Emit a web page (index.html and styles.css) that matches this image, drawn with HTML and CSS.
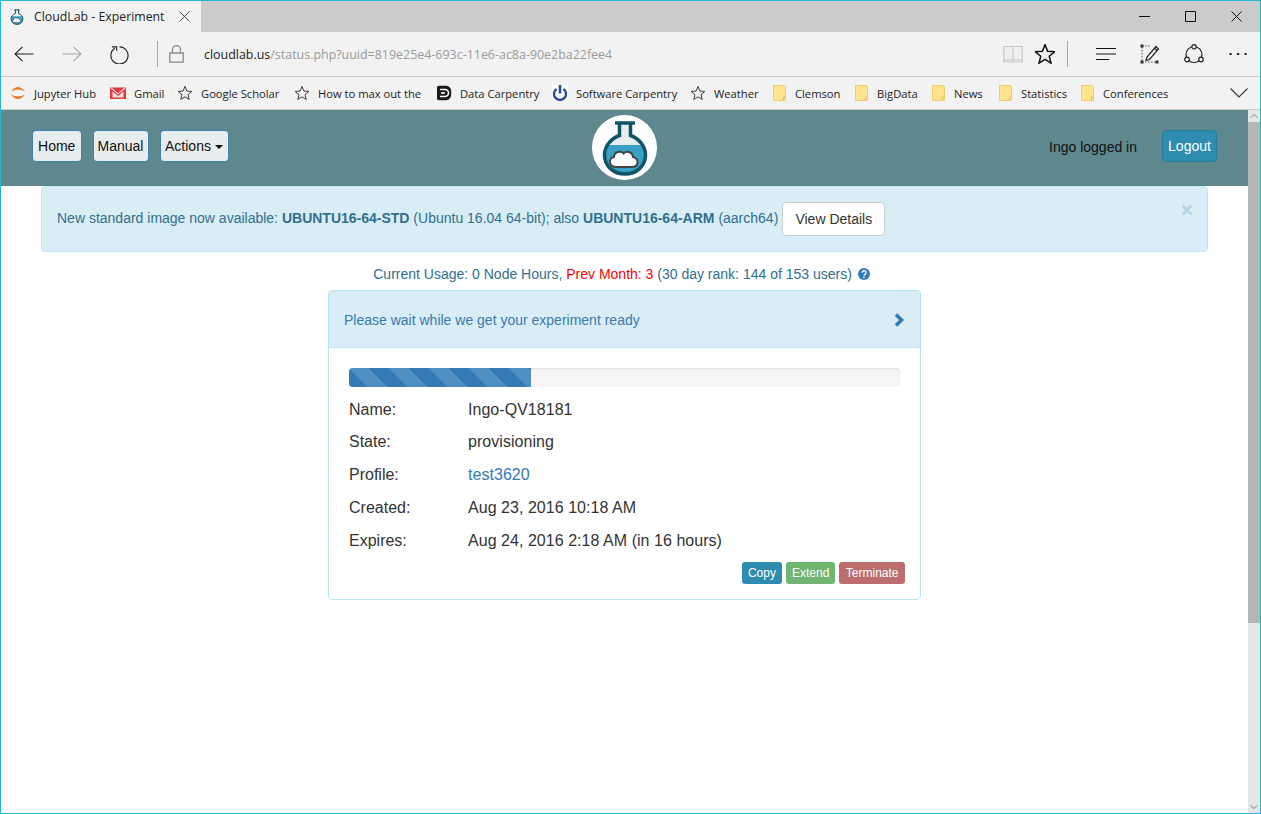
FILE: index.html
```html
<!DOCTYPE html>
<html lang="en">
<head>
<meta charset="utf-8">
<title>CloudLab - Experiment</title>
<link rel="stylesheet" href="styles.css">
</head>
<body>
<svg class="defs" width="0" height="0" aria-hidden="true">
  <symbol id="star" viewBox="0 0 18 18"><path d="M9 1.500l2.100 5.300 5.600.4-4.300 3.600 1.400 5.500L9 13.300l-4.800 3 1.400-5.500L1.300 7.200l5.600-.4z" fill="none" stroke="#3c3c3c" stroke-width="1.100"/></symbol>
  <symbol id="folder" viewBox="0 0 13 16"><path d="M.5.500h10.500l1.500 1v14H.5z" fill="#ffe38e" stroke="#f0cf6c"/><path d="M10.500 15v-3h2" fill="none" stroke="#e3bd54"/></symbol>
  <symbol id="flask" viewBox="0 0 48 56"><path d="M15 2h18M18 3v12.500C8 19 3 27 3 35c0 11 9 19 21 19s21-8 21-19c0-8-5-16-15-19.500V3z" fill="#e8eef0"/><path d="M4.500 25h39c3 11-1 28-19.500 28C7 53 1.500 37 4.500 25z" fill="#3ba0c6"/><path d="M14 3h20M18.500 3v12.500C9 19 3.500 27 3.500 35c0 11 9 19 20.500 19s20.500-8 20.500-19c0-8-5.500-16-15-19.500V3" fill="none" stroke="#0f5566" stroke-width="3.500"/><path d="M15.500 47c-8 0-8.500-9-2.500-10 0-5 7-7 9.500-3.500 3.500-3.500 9.500-1 9.500 3.500 6 1 6.500 10-1 10z" fill="#fff" stroke="#444" stroke-width="2"/></symbol>
</svg>
<div class="window">
  <header class="titlebar">
    <div class="tab">
      <svg class="tab-icon"><use href="#flask"/></svg>
      <span class="tab-title">CloudLab - Experiment</span>
      <svg class="tab-close" viewBox="0 0 11 11"><path d="M.5.500l10 10M10.500.5l-10 10" stroke="#444" fill="none"/></svg>
    </div>
    <div class="win-controls">
      <svg class="win-btn" viewBox="0 0 11 11"><path d="M0 5.500h11" stroke="#111" fill="none"/></svg>
      <svg class="win-btn" viewBox="0 0 11 11"><path d="M.5.500h10v10H.5z" stroke="#111" fill="none"/></svg>
      <svg class="win-btn" viewBox="0 0 11 11"><path d="M.5.500l10 10M10.500.5l-10 10" stroke="#111" fill="none"/></svg>
    </div>
  </header>

  <nav class="toolbar">
    <svg class="tool tool-back" viewBox="0 0 20 16"><path d="M19.500 8H1M8.500.8L1 8l7.500 7.200" fill="none" stroke="#222" stroke-width="1.100"/></svg>
    <svg class="tool tool-forward" viewBox="0 0 20 16"><path d="M.5 8H19M11.500.8L19 8l-7.500 7.200" fill="none" stroke="#a6a6a6" stroke-width="1.100"/></svg>
    <svg class="tool tool-refresh" viewBox="0 0 20 20"><path d="M5 3.500a9 9 0 1 0 5-1.500" fill="none" stroke="#222" stroke-width="1.200"/><path d="M2 2h5v4" fill="none" stroke="#222" stroke-width="1.200"/></svg>
    <span class="tool-sep"></span>
    <svg class="tool tool-lock" viewBox="0 0 15 18"><path d="M.8 8h13.400v9.200H.8zM3.500 8V4.500a4 4 0 0 1 8 0V8" fill="none" stroke="#8a8a8a" stroke-width="1.300"/></svg>
    <div class="url"><span class="url-host">cloudlab.us</span>/status.php?uuid=819e25e4-693c-11e6-ac8a-90e2ba22fee4</div>
    <svg class="tool tool-book" viewBox="0 0 20 18"><path d="M.8 1.500h8.200q.8 0 1 1v13.500q-.2-1-1-1H.8zM19.200 1.500H11q-.8 0-1 1v13.500q.2-1 1-1h8.200zM.8 15v2h18.400v-2" fill="#efefef" stroke="#c8c8c8" stroke-width="1.200"/></svg>
    <svg class="tool tool-fav" viewBox="1 1 16 16"><path d="M9 1.500l2.100 5.300 5.600.4-4.300 3.600 1.400 5.500L9 13.300l-4.800 3 1.400-5.500L1.300 7.200l5.600-.4z" fill="none" stroke="#111" stroke-width="1.200"/></svg>
    <span class="tool-sep tool-sep-right"></span>
    <svg class="tool tool-hub" viewBox="0 0 20 14"><path d="M0 1.500h20M0 7h20M0 12.500h13" stroke="#111" stroke-width="1.100" fill="none"/></svg>
    <svg class="tool tool-note" viewBox="0 0 20 20"><path d="M2 3v15h15" fill="none" stroke="#555" stroke-dasharray="1.500 1.500"/><path d="M2 2h9" fill="none" stroke="#555" stroke-dasharray="1.500 1.500"/><path d="M.5.500h3v3h-3zM.5 16.500h3v3h-3zM15.500 16.500h3v3h-3z" fill="#333"/><path d="M7 13l-1 3.500 3.500-1L18.500 5l-2.500-2.500zM14.500 4l2.500 2.500" fill="none" stroke="#222" stroke-width="1.200"/></svg>
    <svg class="tool tool-share" viewBox="0 0 20 20"><circle cx="10" cy="10.500" r="8" fill="none" stroke="#222" stroke-width="1.200"/><circle cx="10" cy="2.800" r="2.200" fill="#f2f2f2" stroke="#222" stroke-width="1.200"/><circle cx="3" cy="15.500" r="2.300" fill="#f2f2f2" stroke="#222" stroke-width="1.200"/><circle cx="17" cy="15.500" r="2.300" fill="#f2f2f2" stroke="#222" stroke-width="1.200"/></svg>
    <svg class="tool tool-more" viewBox="0 0 18 4"><path d="M.5 1h2.200v2H.5zM8 1h2.200v2H8zM15.500 1h2.200v2h-2.200z" fill="#222"/></svg>
  </nav>

  <div class="favbar">
    <a class="fav"><svg class="fav-icon" viewBox="0 0 16 16"><path d="M1 6.500Q8-2.500 15 6.500Q8 2.500 1 6.500zM1 9.500Q8 18.500 15 9.500Q8 13.500 1 9.500z" fill="#f37726"/></svg>Jupyter Hub</a>
    <a class="fav"><svg class="fav-icon" viewBox="0 0 16 16"><path d="M0 2.500h16v11.500H0z" fill="#e0393e"/><path d="M2.500 6.500L8 11l5.500-4.500v6h-11z" fill="#f6dfdf"/><path d="M1 3l7 5.800L15 3" fill="none" stroke="#f6dfdf" stroke-width="1.100"/></svg>Gmail</a>
    <a class="fav"><svg class="fav-icon"><use href="#star"/></svg>Google Scholar</a>
    <a class="fav"><svg class="fav-icon"><use href="#star"/></svg>How to max out the</a>
    <a class="fav"><svg class="fav-icon" viewBox="0 0 16 16"><path d="M3 .8h7.500a6 6 0 0 1 4.700 6.200v2a6 6 0 0 1-4.700 6.200H3A2 2 0 0 1 1 13V3a2 2 0 0 1 2-2.200z" fill="#1a1a1a"/><path d="M4 4.500h5a3 3 0 0 1 0 7H4" fill="none" stroke="#fff" stroke-width="1.600"/><path d="M5 8h4" stroke="#fff" stroke-width="1.600"/></svg>Data Carpentry</a>
    <a class="fav"><svg class="fav-icon" viewBox="0 0 16 16"><path d="M0 0h16v16H0z" fill="#fff"/><path d="M4.500 4a6 6 0 1 0 7 0" fill="none" stroke="#2a4a9e" stroke-width="2.400"/><path d="M8 0v8.500" stroke="#2a4a9e" stroke-width="2.600"/></svg>Software Carpentry</a>
    <a class="fav"><svg class="fav-icon"><use href="#star"/></svg>Weather</a>
    <a class="fav"><svg class="fav-icon fav-folder"><use href="#folder"/></svg>Clemson</a>
    <a class="fav"><svg class="fav-icon fav-folder"><use href="#folder"/></svg>BigData</a>
    <a class="fav"><svg class="fav-icon fav-folder"><use href="#folder"/></svg>News</a>
    <a class="fav"><svg class="fav-icon fav-folder"><use href="#folder"/></svg>Statistics</a>
    <a class="fav"><svg class="fav-icon fav-folder"><use href="#folder"/></svg>Conferences</a>
    <svg class="fav-more" viewBox="0 0 18 10"><path d="M.5.500L9 9l8.500-8.500" fill="none" stroke="#333" stroke-width="1.100"/></svg>
  </div>

  <div class="viewport">
    <main class="page">
      <div class="site-nav">
        <div class="site-nav-left">
          <a class="nav-btn">Home</a>
          <a class="nav-btn">Manual</a>
          <a class="nav-btn">Actions <span class="caret"></span></a>
        </div>
        <div class="logo"><svg class="logo-flask"><use href="#flask"/></svg></div>
        <div class="site-nav-right">
          <span class="logged">Ingo logged in</span>
          <a class="logout">Logout</a>
        </div>
      </div>

      <div class="alert">
        <span class="alert-text">New standard image now available: <b>UBUNTU16-64-STD</b> (Ubuntu 16.04 64-bit); also <b>UBUNTU16-64-ARM</b> (aarch64)</span>
        <a class="details-btn">View Details</a>
        <svg class="alert-close" viewBox="0 0 12 12"><path d="M1.500 1.500l9 9M10.500 1.500l-9 9" stroke="#b9d4e3" stroke-width="2.800" fill="none"/></svg>
      </div>

      <p class="usage">Current Usage: 0 Node Hours, <span class="red">Prev Month: 3</span> (30 day rank: 144 of 153 users) <svg class="help" viewBox="0 0 12 12"><circle cx="6" cy="6" r="6" fill="#337ab7"/><path d="M4 4.700a2 2 0 1 1 3 1.700c-.7.400-1 .7-1 1.400" fill="none" stroke="#fff" stroke-width="1.400"/><path d="M5.200 8.700h1.500v1.500H5.200z" fill="#fff"/></svg></p>

      <section class="panel">
        <div class="panel-head">
          <span class="panel-title">Please wait while we get your experiment ready</span>
          <svg class="chevron" viewBox="0 0 12 14"><path d="M3 1.500L8.500 7 3 12.500" fill="none" stroke="#337ab7" stroke-width="3.600"/></svg>
        </div>
        <div class="panel-body">
          <div class="progress"><div class="progress-bar" style="width: 33%"></div></div>
          <dl class="facts">
            <dt>Name:</dt><dd>Ingo-QV18181</dd>
            <dt>State:</dt><dd>provisioning</dd>
            <dt>Profile:</dt><dd><a class="link">test3620</a></dd>
            <dt>Created:</dt><dd>Aug 23, 2016 10:18 AM</dd>
            <dt>Expires:</dt><dd>Aug 24, 2016 2:18 AM (in 16 hours)</dd>
          </dl>
          <div class="actions">
            <a class="mini mini-copy">Copy</a>
            <a class="mini mini-extend">Extend</a>
            <a class="mini mini-term">Terminate</a>
          </div>
        </div>
      </section>
    </main>
    <aside class="scrollbar">
      <svg class="sb-arrow" viewBox="0 0 11 12"><path d="M2 7.500l3.500-3 3.500 3" fill="none" stroke="#a8a8a8" stroke-width="1.300"/></svg>
      <div class="sb-thumb"></div>
      <svg class="sb-arrow sb-arrow-end" viewBox="0 0 11 12"><path d="M2 4.500l3.500 3 3.500-3" fill="none" stroke="#a8a8a8" stroke-width="1.300"/></svg>
    </aside>
  </div>
</div>
</body>
</html>
```

FILE: styles.css
```css
* { box-sizing: border-box; }
html, body { margin: 0; padding: 0; height: 100%; overflow: hidden; background: #fff; }
.defs { position: absolute; }
.window {
  width: 1261px; height: 814px;
  border: 1px solid #24b7cc;
  display: flex; flex-direction: column;
  font-family: "Liberation Sans", Arial, sans-serif;
}

/* title bar */
.titlebar { height: 31px; background: #cbcbcb; display: flex; justify-content: space-between; flex: none; }
.tab { width: 200px; background: #f2f2f2; display: flex; align-items: center; font: 13px "Open Sans", sans-serif; color: #222; }
.tab-icon { width: 14px; height: 16px; margin-left: 9px; }
.tab-title { margin-left: 10px; width: 145px; white-space: nowrap; font-size: 12.300px; }
.tab-close { width: 11px; height: 11px; }
.win-controls { display: flex; gap: 35px; padding: 10px 18px 0 0; }
.win-btn { width: 11px; height: 11px; }

/* toolbar */
.toolbar { height: 45px; background: #f2f2f2; border-bottom: 1px solid #c9c9c9; display: flex; align-items: center; flex: none; padding-left: 13px; }
.tool { flex: none; }
.tool-back, .tool-forward { width: 20px; height: 16px; }
.tool-forward { margin-left: 28px; }
.tool-refresh { width: 19px; height: 19px; margin-left: 28px; }
.tool-sep { width: 1px; height: 26px; background: #a8a8a8; margin-left: 28px; flex: none; }
.tool-lock { width: 15px; height: 18px; margin-left: 11px; }
.url { margin-left: 20px; width: 799px; font: 12.440px "Open Sans", sans-serif; color: #9a9a9a; white-space: nowrap; }
.url-host { color: #222; }
.tool-book { width: 20px; height: 18px; }
.tool-fav { width: 20px; height: 20px; margin-left: 12px; }
.tool-sep-right { margin-left: 12px; }
.tool-hub { width: 20px; height: 14px; margin-left: 28px; }
.tool-note { width: 20px; height: 20px; margin-left: 24px; }
.tool-share { width: 20px; height: 20px; margin-left: 24px; }
.tool-more { width: 18px; height: 4px; margin-left: 25px; }

/* favourites */
.favbar {
  height: 33px; background: #f2f2f2; border-bottom: 1px solid #c9c9c9; flex: none;
  display: grid; align-items: center; padding-left: 9px;
  grid-template-columns: 100px 67px 117px 142px 116px 138px 83px 82px 77px 67px 82px 149px 18px;
  font: 11.200px "Open Sans", sans-serif; color: #222;
}
.fav { display: flex; align-items: center; white-space: nowrap; }
.fav-icon { width: 16px; height: 16px; margin-right: 8px; flex: none; }
.fav-icon.fav-folder { width: 13px; margin-right: 9px; }
.fav-more { width: 18px; height: 10px; }

/* page */
.viewport { flex: 1; display: flex; min-height: 0; }
.page { flex: 1; min-width: 0; font-size: 14px; color: #333; }
.site-nav { height: 76px; background: #5e888e; display: grid; grid-template-columns: 1fr auto 1fr; align-items: start; padding: 0 31px; }
.site-nav-left { display: grid; grid-template-columns: 49.500px 56px 69px; gap: 11px; margin-top: 20px; }
.nav-btn {
  height: 32px; display: flex; align-items: center; justify-content: center; gap: 4px; white-space: nowrap;
  background: #e8eef0; border: 1px solid #3f7fb8; border-radius: 4px; color: #111;
}
.caret { width: 0; height: 0; border-left: 4px solid transparent; border-right: 4px solid transparent; border-top: 4px solid #111; margin-top: 2px; }
.logo { width: 65px; height: 65px; margin-top: 5px; border-radius: 50%; background: #fff; display: flex; align-items: center; justify-content: center; }
.logo-flask { width: 48px; height: 56px; }
.site-nav-right { display: flex; justify-content: flex-end; align-items: center; gap: 25px; margin-top: 20px; }
.logged { color: #111; margin-top: 2px; }
.logout { height: 32px; width: 55px; display: flex; align-items: center; justify-content: center; background: #2d8cb0; border: 1px solid #2a7c9c; border-radius: 4px; color: #fff; }

.alert {
  position: relative; margin: 0 40px; height: 66px; padding: 0 15px 2px; display: flex; align-items: center; gap: 4px;
  background: #d9edf7; border: 1px solid #bce8f1; border-radius: 4px; color: #31708f;
}
.details-btn { height: 34px; width: 103px; display: flex; align-items: center; justify-content: center; background: #fff; border: 1px solid #ccc; border-radius: 4px; color: #333; margin-top: 2px; }
.alert-close { position: absolute; top: 17px; right: 14px; width: 12px; height: 12px; }

.usage { margin: 13px 0 7px; padding-right: 6px; height: 18px; line-height: 18px; text-align: center; color: #31708f; }
.red { color: #f00; }
.help { width: 12px; height: 12px; margin-left: 2px; vertical-align: -1px; }

.panel { width: 593px; height: 310px; margin: 0 auto; border: 1px solid #b5e5f0; border-radius: 4px; overflow: hidden; }
.panel-head { height: 57px; background: #d9edf7; border-bottom: 1px solid #bce8f1; display: flex; align-items: center; justify-content: space-between; padding: 2px 15px 0; color: #3a7ab0; }
.chevron { width: 12px; height: 14px; }
.panel-body { padding: 20px 15px 0 20px; }
.progress { height: 19px; width: 551px; background: #f5f5f5; border-radius: 4px; box-shadow: inset 0 1px 2px rgba(0,0,0,.1); overflow: hidden; }
.progress-bar {
  height: 100%; background-color: #337ab7;
  background-image: linear-gradient(45deg, rgba(255,255,255,.15) 25%, transparent 25%, transparent 50%, rgba(255,255,255,.15) 50%, rgba(255,255,255,.15) 75%, transparent 75%, transparent);
  background-size: 40px 40px;
}
.facts { margin: 6px 0 0; display: grid; grid-template-columns: 119px 1fr; grid-template-rows: 32px repeat(4, 33px); align-items: center; font-size: 16px; color: #333; }
.facts dt { font-weight: normal; }
.facts dd { margin: 0; letter-spacing: .04px; }
.facts dt:first-of-type, .facts dd:first-of-type { margin-top: 2px; }
.link { color: #337ab7; }
.actions { display: flex; justify-content: flex-end; gap: 4px; margin-top: 5px; }
.mini { height: 22px; padding: 0 6px; display: flex; align-items: center; border-radius: 3px; font-size: 12px; color: #fff; }
.mini-copy { background: #2d8cb0; }
.mini-extend { background: #6fb673; }
.mini-term { background: #bc6e6e; padding: 0 6.500px; }

/* scrollbar */
.scrollbar { width: 12px; flex: none; background: #e6e6e6; display: flex; flex-direction: column; }
.sb-arrow { width: 12px; height: 12px; flex: none; }
.sb-thumb { height: 501px; background: #b5b5b5; flex: none; }
.sb-arrow-end { margin-top: auto; }
```
